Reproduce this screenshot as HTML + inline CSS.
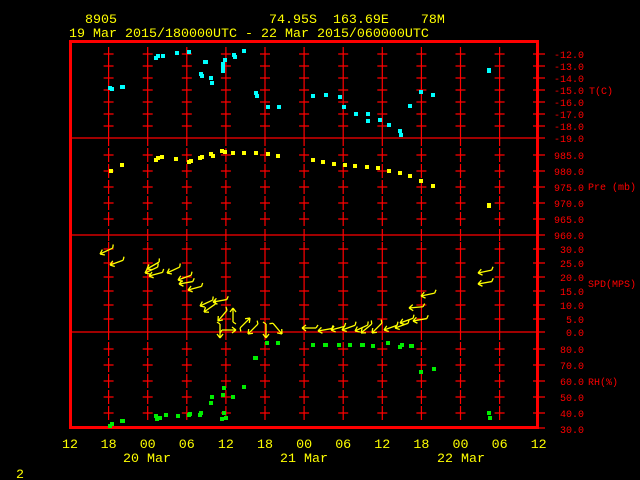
<!DOCTYPE html>
<html><head><meta charset="utf-8"><style>
html,body{margin:0;padding:0;background:#000;width:640px;height:480px;overflow:hidden}
svg{display:block}
.y{fill:#ffff00;font-family:"Liberation Mono",monospace;font-size:13.33px}
.r{fill:#ff0000;font-family:"Liberation Mono",monospace;font-size:10px}
</style></head><body>
<svg width="640" height="480" viewBox="0 0 640 480" xmlns="http://www.w3.org/2000/svg">
<defs>
<g id="col" stroke="#ff0000" stroke-width="1.2" fill="none">
<path d="M-5 54h10M0 47v14M-5 66h10M0 59v14M-5 78h10M0 71v14M-5 90h10M0 83v14M-5 102h10M0 95v14M-5 114h10M0 107v14M-5 126h10M0 119v19
M0 138v8M-5 155h10M0 148v14M-5 171h10M0 164v14M-5 187h10M0 180v14M-5 203h10M0 196v14M-5 219h10M0 212v14M0 229v12
M-5 249h10M0 242v14M-5 263h10M0 256v14M-5 277h10M0 270v14M-5 291h10M0 284v14M-5 305h10M0 298v14M-5 319h10M0 312v14M0 326v14
M-5 349h10M0 342v14M-5 365h10M0 358v14M-5 381h10M0 374v14M-5 397h10M0 390v14M-5 413h10M0 406v14"/>
</g>
<g id="ar" stroke="#ffff00" stroke-width="1.3" fill="none"><path d="M0 0H14M0 0l4-3M0 0l4 3M14 0l2-3"/></g>
</defs>

<text class="y" x="69" y="23" xml:space="preserve">  8905                   74.95S  163.69E    78M</text>
<text class="y" x="69" y="37">19 Mar 2015/180000UTC - 22 Mar 2015/060000UTC</text>

<!-- frame -->
<rect x="70.5" y="41.5" width="467" height="386" fill="none" stroke="#ff0000" stroke-width="3"/>
<path d="M70 138H545M70 235H545M70 332H545" stroke="#ff0000" stroke-width="1.3"/>

<use href="#col" x="108.6"/><use href="#col" x="147.7"/><use href="#col" x="186.8"/><use href="#col" x="225.9"/>
<use href="#col" x="265"/><use href="#col" x="304.1"/><use href="#col" x="343.2"/><use href="#col" x="382.3"/>
<use href="#col" x="421.4"/><use href="#col" x="460.5"/><use href="#col" x="499.6"/>

<path stroke="#ff0000" stroke-width="1.3" d="M533 54h12M533 66h12M533 78h12M533 90h12M533 102h12M533 114h12M533 126h12M533 155h12M533 171h12M533 187h12M533 203h12M533 219h12M533 249h12M533 263h12M533 277h12M533 291h12M533 305h12M533 319h12M533 349h12M533 365h12M533 381h12M533 397h12M533 413h12M533 428h12"/>

<g class="r" text-anchor="end">
<text x="584" y="58">-12.0</text><text x="584" y="70">-13.0</text><text x="584" y="82">-14.0</text><text x="584" y="94">-15.0</text><text x="584" y="106">-16.0</text><text x="584" y="118">-17.0</text><text x="584" y="130">-18.0</text><text x="584" y="142">-19.0</text>
<text x="584" y="159">985.0</text><text x="584" y="175">980.0</text><text x="584" y="191">975.0</text><text x="584" y="207">970.0</text><text x="584" y="223">965.0</text><text x="584" y="239">960.0</text>
<text x="584" y="253">30.0</text><text x="584" y="267">25.0</text><text x="584" y="281">20.0</text><text x="584" y="295">15.0</text><text x="584" y="309">10.0</text><text x="584" y="323">5.0</text><text x="584" y="336">0.0</text>
<text x="584" y="353">80.0</text><text x="584" y="369">70.0</text><text x="584" y="385">60.0</text><text x="584" y="401">50.0</text><text x="584" y="417">40.0</text><text x="584" y="433">30.0</text>
</g>
<g class="r">
<text x="589" y="94">T(C)</text><text x="588" y="190">Pre (mb)</text><text x="588" y="287">SPD(MPS)</text><text x="588" y="385">RH(%)</text>
</g>

<g class="y" text-anchor="middle">
<text x="70" y="448">12</text><text x="108.6" y="448">18</text><text x="147.7" y="448">00</text><text x="186.8" y="448">06</text><text x="225.9" y="448">12</text><text x="265" y="448">18</text><text x="304.1" y="448">00</text><text x="343.2" y="448">06</text><text x="382.3" y="448">12</text><text x="421.4" y="448">18</text><text x="460.5" y="448">00</text><text x="499.6" y="448">06</text><text x="538.7" y="448">12</text>
</g>
<text class="y" x="123" y="462">20 Mar</text>
<text class="y" x="280" y="462">21 Mar</text>
<text class="y" x="437" y="462">22 Mar</text>
<text class="y" x="16" y="478">2</text>

<!-- T -->
<g fill="#00ffff">
<rect x="108" y="86" width="4" height="4"/><rect x="110" y="87" width="4" height="4"/><rect x="120" y="85" width="5" height="4"/><rect x="154" y="56" width="4" height="4"/><rect x="156" y="54" width="4" height="4"/><rect x="161" y="54" width="4" height="4"/><rect x="175" y="51" width="4" height="4"/><rect x="187" y="50" width="4" height="4"/><rect x="203" y="60" width="5" height="4"/><rect x="199" y="72" width="4" height="4"/><rect x="200" y="74" width="4" height="4"/><rect x="209" y="76" width="4" height="4"/><rect x="210" y="81" width="4" height="4"/><rect x="221" y="66" width="4" height="4"/><rect x="221" y="62" width="4" height="4"/><rect x="221" y="69" width="4" height="4"/><rect x="223" y="58" width="4" height="4"/><rect x="232" y="53" width="4" height="4"/><rect x="233" y="55" width="4" height="4"/><rect x="242" y="49" width="4" height="4"/><rect x="254" y="91" width="4" height="4"/><rect x="255" y="94" width="4" height="4"/><rect x="266" y="105" width="4" height="4"/><rect x="277" y="105" width="4" height="4"/><rect x="311" y="94" width="4" height="4"/><rect x="324" y="93" width="4" height="4"/><rect x="338" y="95" width="4" height="4"/><rect x="342" y="105" width="4" height="4"/><rect x="354" y="112" width="4" height="4"/><rect x="366" y="112" width="4" height="4"/><rect x="366" y="119" width="4" height="4"/><rect x="378" y="118" width="4" height="4"/><rect x="387" y="123" width="4" height="4"/><rect x="398" y="129" width="4" height="4"/><rect x="399" y="133" width="4" height="4"/><rect x="408" y="104" width="4" height="4"/><rect x="419" y="90" width="4" height="4"/><rect x="431" y="93" width="4" height="4"/><rect x="487" y="68" width="4" height="5"/>
</g>
<!-- P -->
<g fill="#ffff00">
<rect x="109" y="169" width="4" height="4"/><rect x="120" y="163" width="4" height="4"/><rect x="154" y="158" width="4" height="4"/><rect x="156" y="156" width="4" height="4"/><rect x="160" y="155" width="4" height="4"/><rect x="174" y="157" width="4" height="4"/><rect x="187" y="160" width="4" height="4"/><rect x="189" y="159" width="4" height="4"/><rect x="198" y="156" width="4" height="4"/><rect x="200" y="155" width="4" height="4"/><rect x="209" y="152" width="4" height="4"/><rect x="211" y="154" width="4" height="4"/><rect x="220" y="149" width="4" height="4"/><rect x="223" y="150" width="4" height="4"/><rect x="231" y="151" width="4" height="4"/><rect x="242" y="151" width="4" height="4"/><rect x="254" y="151" width="4" height="4"/><rect x="266" y="152" width="4" height="4"/><rect x="276" y="154" width="4" height="4"/><rect x="311" y="158" width="4" height="4"/><rect x="321" y="160" width="4" height="4"/><rect x="332" y="162" width="4" height="4"/><rect x="343" y="163" width="4" height="4"/><rect x="353" y="164" width="4" height="4"/><rect x="365" y="165" width="4" height="4"/><rect x="376" y="166" width="4" height="4"/><rect x="387" y="169" width="4" height="4"/><rect x="398" y="171" width="4" height="4"/><rect x="408" y="174" width="4" height="4"/><rect x="419" y="179" width="4" height="4"/><rect x="431" y="184" width="4" height="4"/><rect x="487" y="203" width="4" height="5"/>
</g>
<!-- RH -->
<g fill="#00ee00">
<rect x="108" y="424" width="4" height="4"/><rect x="110" y="422" width="4" height="4"/><rect x="120" y="419" width="5" height="4"/><rect x="154" y="414" width="4" height="4"/><rect x="155" y="417" width="4" height="4"/><rect x="158" y="416" width="4" height="4"/><rect x="164" y="413" width="4" height="4"/><rect x="176" y="414" width="4" height="4"/><rect x="187" y="413" width="4" height="4"/><rect x="188" y="412" width="4" height="4"/><rect x="198" y="413" width="4" height="4"/><rect x="199" y="411" width="4" height="4"/><rect x="209" y="401" width="4" height="4"/><rect x="210" y="395" width="4" height="4"/><rect x="221" y="393" width="4" height="4"/><rect x="222" y="386" width="4" height="4"/><rect x="222" y="411" width="4" height="4"/><rect x="220" y="417" width="4" height="4"/><rect x="224" y="416" width="4" height="4"/><rect x="231" y="395" width="4" height="4"/><rect x="242" y="385" width="4" height="4"/><rect x="253" y="356" width="5" height="4"/><rect x="265" y="341" width="4" height="4"/><rect x="276" y="341" width="4" height="4"/><rect x="311" y="343" width="4" height="4"/><rect x="323" y="343" width="5" height="4"/><rect x="337" y="343" width="4" height="4"/><rect x="348" y="343" width="4" height="4"/><rect x="360" y="343" width="5" height="4"/><rect x="371" y="344" width="4" height="4"/><rect x="386" y="341" width="4" height="4"/><rect x="398" y="345" width="4" height="4"/><rect x="400" y="343" width="4" height="4"/><rect x="409" y="344" width="5" height="4"/><rect x="419" y="370" width="4" height="4"/><rect x="432" y="367" width="4" height="4"/><rect x="487" y="411" width="4" height="4"/><rect x="488" y="416" width="4" height="4"/>
</g>
<!-- wind arrows -->
<use href="#ar" transform="translate(100,254) rotate(-25)"/>
<use href="#ar" transform="translate(110,265) rotate(-20)"/>
<use href="#ar" transform="translate(145,273) rotate(-25)"/>
<use href="#ar" transform="translate(147,269) rotate(-30)"/>
<use href="#ar" transform="translate(149,276) rotate(-15)"/>
<use href="#ar" transform="translate(167,273) rotate(-25)"/>
<use href="#ar" transform="translate(178,280) rotate(-20)"/>
<use href="#ar" transform="translate(179,284) rotate(-10)"/>
<use href="#ar" transform="translate(188,290) rotate(-15)"/>
<use href="#ar" transform="translate(200,306) rotate(-25)"/>
<use href="#ar" transform="translate(204,312) rotate(-35)"/>
<use href="#ar" transform="translate(213,302) rotate(-10)"/>
<use href="#ar" transform="translate(218,321) rotate(-50)"/>
<use href="#ar" transform="translate(233,308) rotate(90)"/>
<use href="#ar" transform="translate(250,318) rotate(135)"/>
<use href="#ar" transform="translate(248,334) rotate(-45)"/>
<use href="#ar" transform="translate(220,338) rotate(-90)"/>
<use href="#ar" transform="translate(236,330) rotate(180)"/>
<use href="#ar" transform="translate(266,338) rotate(-90)"/>
<use href="#ar" transform="translate(282,334) rotate(-130)"/>
<use href="#ar" transform="translate(302,328) rotate(0)"/>
<use href="#ar" transform="translate(318,331) rotate(-10)"/>
<use href="#ar" transform="translate(331,330) rotate(-15)"/>
<use href="#ar" transform="translate(342,330) rotate(-20)"/>
<use href="#ar" transform="translate(355,331) rotate(-25)"/>
<use href="#ar" transform="translate(361,333) rotate(-40)"/>
<use href="#ar" transform="translate(372,333) rotate(-45)"/>
<use href="#ar" transform="translate(384,330) rotate(-20)"/>
<use href="#ar" transform="translate(395,328) rotate(-20)"/>
<use href="#ar" transform="translate(400,323) rotate(-20)"/>
<use href="#ar" transform="translate(413,321) rotate(-10)"/>
<use href="#ar" transform="translate(409,308) rotate(-5)"/>
<use href="#ar" transform="translate(421,296) rotate(-12)"/>
<use href="#ar" transform="translate(478,273) rotate(-12)"/>
<use href="#ar" transform="translate(478,284) rotate(-10)"/>
</svg>
</body></html>
